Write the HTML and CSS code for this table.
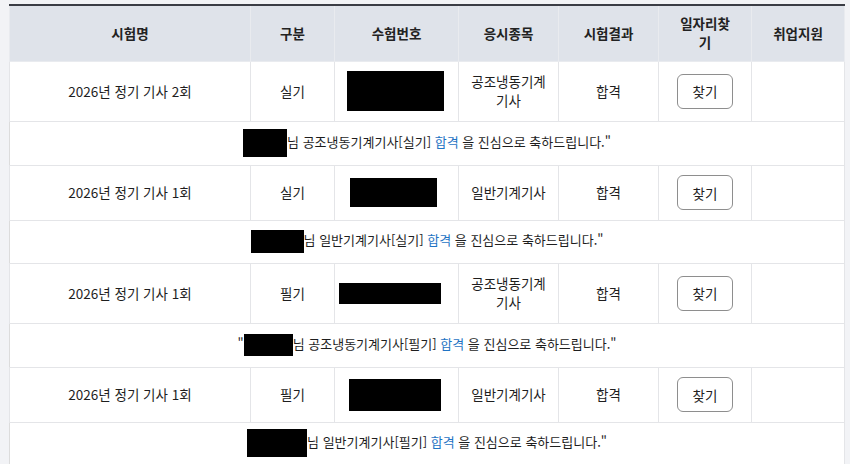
FILE: index.html
```html
<!DOCTYPE html>
<html lang="ko">
<head>
<meta charset="utf-8">
<link rel="stylesheet" href="styles.css">
</head>
<body>
<table class="result">
  <colgroup>
    <col class="c-name"><col class="c-type"><col class="c-no"><col class="c-subj"><col class="c-res"><col class="c-job"><col class="c-sup">
  </colgroup>
  <thead>
    <tr class="head">
      <th>시험명</th><th>구분</th><th>수험번호</th><th>응시종목</th><th>시험결과</th><th>일자리찾<br>기</th><th>취업지원</th>
    </tr>
  </thead>
  <tbody>
    <tr class="row tall">
      <td>2026년 정기 기사 2회</td><td>실기</td><td><span class="redact r1a"></span></td><td>공조냉동기계<br>기사</td><td>합격</td><td><button class="find">찾기</button></td><td></td>
    </tr>
    <tr class="msg m1">
      <td colspan="7"><span class="redact n1"></span>님 공조냉동기계기사[실기] <span class="pass">합격</span> 을 진심으로 축하드립니다."</td>
    </tr>
    <tr class="row short">
      <td>2026년 정기 기사 1회</td><td>실기</td><td><span class="redact r2a"></span></td><td>일반기계기사</td><td>합격</td><td><button class="find">찾기</button></td><td></td>
    </tr>
    <tr class="msg m2">
      <td colspan="7"><span class="redact n2"></span>님 일반기계기사[실기] <span class="pass">합격</span> 을 진심으로 축하드립니다."</td>
    </tr>
    <tr class="row tall">
      <td>2026년 정기 기사 1회</td><td>필기</td><td><span class="redact r3a"></span></td><td>공조냉동기계<br>기사</td><td>합격</td><td><button class="find">찾기</button></td><td></td>
    </tr>
    <tr class="msg m1">
      <td colspan="7">"<span class="redact n3"></span>님 공조냉동기계기사[필기] <span class="pass">합격</span> 을 진심으로 축하드립니다."</td>
    </tr>
    <tr class="row short">
      <td>2026년 정기 기사 1회</td><td>필기</td><td><span class="redact r4a"></span></td><td>일반기계기사</td><td>합격</td><td><button class="find">찾기</button></td><td></td>
    </tr>
    <tr class="msg m3">
      <td colspan="7"><span class="redact n4"></span>님 일반기계기사[필기] <span class="pass">합격</span> 을 진심으로 축하드립니다."</td>
    </tr>
  </tbody>
</table>
</body>
</html>
```

FILE: styles.css
```css
html, body {
  margin: 0;
  padding: 0;
  background: #f2f3f6;
  overflow: hidden;
}
body {
  font-family: "Noto Sans CJK KR", "Noto Sans", sans-serif;
  font-size: 13.5px;
  color: #1e1e1e;
  padding: 4px 0 0 9px;
}
.result {
  width: 835px;
  border-collapse: collapse;
  table-layout: fixed;
  background: #fff;
  border-top: 2px solid #3a3d45;
}
.c-name { width: 241px; }
.c-type { width: 84px; }
.c-no { width: 124px; }
.c-subj { width: 100px; }
.c-res { width: 100px; }
.c-job { width: 93px; }
.c-sup { width: 93px; }

th, td {
  text-align: center;
  vertical-align: middle;
  padding: 0;
  line-height: 19px;
  border: 1px solid #e4e5e8;
}
th {
  background: #dfe3ea;
  font-weight: 700;
  color: #222;
  border-top: none;
  border-color: #e9ebef;
}
.head { height: 56px; }
.row.tall { height: 60px; }
.row.short { height: 55px; }
.msg.m1 { height: 44px; }
.msg.m2 { height: 43px; }
.msg.m3 { height: 42px; }
.msg td {
  border-left: 1px solid #dcdcdc;
  font-size: 13px;
}

.redact {
  display: inline-block;
  background: #000;
  vertical-align: middle;
}
.r1a { width: 97px; height: 40px; margin-left: -3px; }
.r2a { width: 87px; height: 29px; margin-left: -7px; }
.r3a { width: 102px; height: 21px; margin-left: -14px; }
.r4a { width: 92px; height: 32px; margin-left: -4px; }
.n1 { width: 44px; height: 28px; }
.n2 { width: 53px; height: 23px; }
.n3 { width: 49px; height: 22px; }
.n4 { width: 60px; height: 28px; }

.pass { color: #1f74c4; }

.find {
  font-family: inherit;
  font-size: 13.5px;
  color: #222;
  background: #fff;
  border: 1px solid #8e8e8e;
  border-radius: 6px;
  width: 56px;
  height: 35px;
  padding: 0;
  cursor: pointer;
}
```
